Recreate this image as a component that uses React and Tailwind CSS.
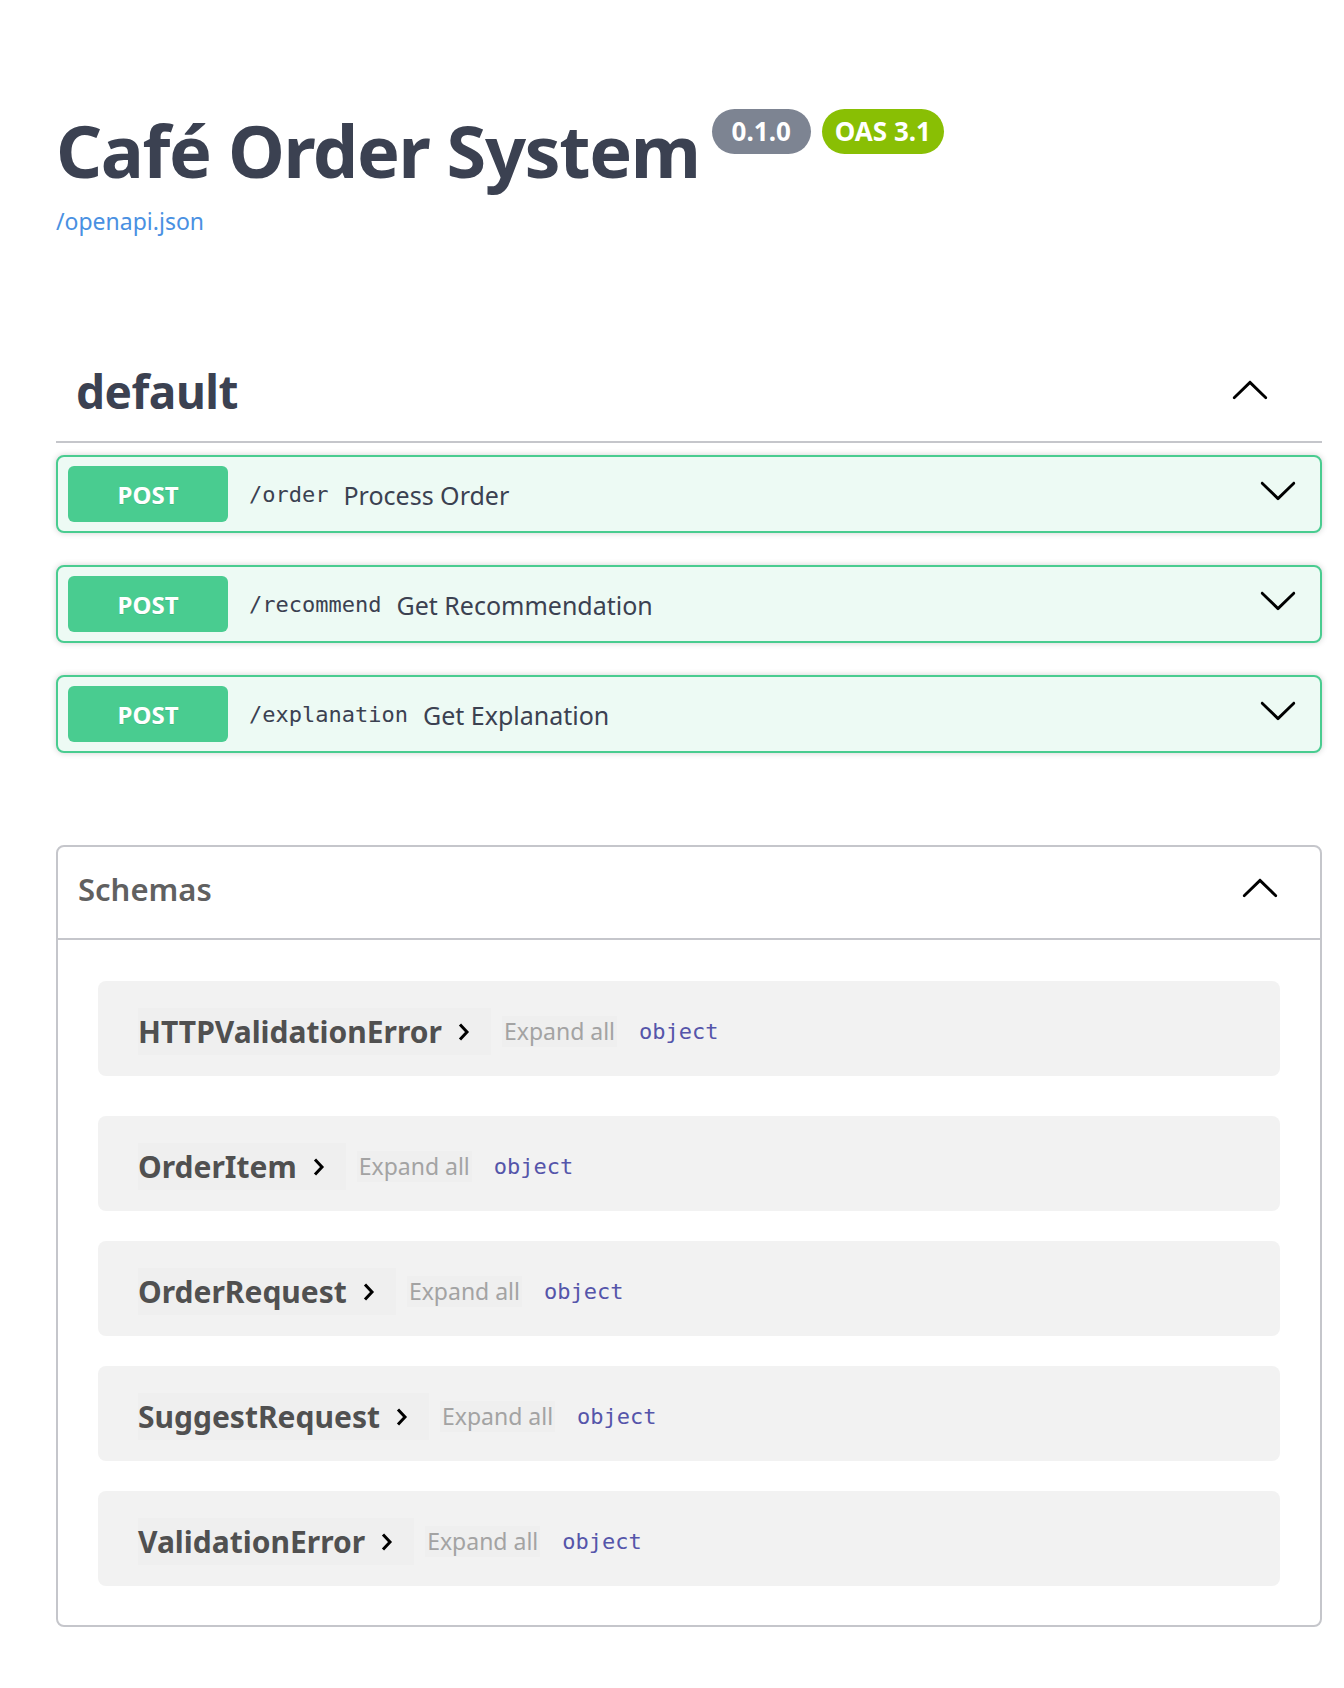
const Chevron = ({ className }) => (
  <svg viewBox="0 0 20 20" fill="currentColor" className={className}>
    <path d="M17.418 6.109c.272-.268.709-.268.979 0s.271.701 0 .969l-7.908 7.83c-.27.268-.707.268-.979 0l-7.908-7.83c-.27-.268-.27-.701 0-.969.271-.268.709-.268.979 0L10 13.25l7.418-7.141z" />
  </svg>
);

const ModelToggle = () => (
  <svg viewBox="0 0 14 20" className="ml-[15px] h-[20px] w-[14px]">
    <polyline points="3,2.5 10,10 3,17.5" fill="none" stroke="#000" strokeWidth="3" />
  </svg>
);

const operations = [
  { path: '/order', summary: 'Process Order' },
  { path: '/recommend', summary: 'Get Recommendation' },
  { path: '/explanation', summary: 'Get Explanation' },
];

const schemas = ['HTTPValidationError', 'OrderItem', 'OrderRequest', 'SuggestRequest', 'ValidationError'];

const Operation = ({ path, summary }) => (
  <div className="flex items-center rounded-[8px] border-2 border-[#49cc90] bg-[#edfaf4] px-[10px] py-[9px] shadow-[0_0_6px_rgba(0,0,0,0.19)]">
    <span className="flex h-[56px] w-[160px] items-center justify-center rounded-[6px] bg-[#49cc90] pt-[2px] text-[24px] font-bold text-white [text-shadow:0_1px_0_rgba(0,0,0,0.1)]">
      POST
    </span>
    <span className="ml-[21px] font-['DejaVu_Sans_Mono',monospace] text-[22px] text-[#3b4151]">{path}</span>
    <span className="ml-[15px] mt-[3px] text-[25px] text-[#3b4151]">{summary}</span>
    <Chevron className="mb-[8px] ml-auto mr-[12px] h-[40px] w-[40px] text-black" />
  </div>
);

const SchemaRow = ({ name, first }) => (
  <div className={`flex h-[95px] items-center rounded-[8px] bg-[#f2f2f2] pl-[40px] pt-[6px] ${first ? 'mb-[10px]' : ''}`}>
    <span className="flex h-[47px] items-center bg-[#efefef] pr-[20px]">
      <span className="text-[30px] font-bold text-[#505050]">{name}</span>
      <ModelToggle />
    </span>
    <span className="ml-[11px] flex h-[31px] items-center bg-[#efefef] px-[2px] text-[23px] text-[#a3a3a3]">Expand all</span>
    <span className="ml-[22px] font-['DejaVu_Sans_Mono',monospace] text-[22px] text-[#55a]">object</span>
  </div>
);

export default function App() {
  return (
    <div className="min-h-screen bg-white pb-[61px] pl-[56px] pr-[22px] pt-[109px] font-['Noto_Sans',sans-serif]">
      <div className="flex items-start">
        <h1 className="mt-[5px] text-[72px] font-bold leading-[72px] tracking-[-1.4px] text-[#3b4151]">Café Order System</h1>
        <span className="ml-[12px] flex h-[45px] items-center rounded-full bg-[#7d8492] px-[20px] text-[26px] font-bold text-white">0.1.0</span>
        <span className="ml-[11px] flex h-[45px] items-center rounded-full bg-[#89bf04] px-[13px] text-[26px] font-bold text-white">OAS 3.1</span>
      </div>
      <div className="mt-[20px]">
        <a className="text-[23px] leading-[31px] text-[#4990e2]">/openapi.json</a>
      </div>

      <div className="mt-[104px] flex items-center justify-between border-b-2 border-[#c5c6cb] py-[26px] pl-[20px] pr-[52px]">
        <h2 className="text-[46px] font-bold leading-[48px] tracking-[-0.5px] text-[#3b4151]">default</h2>
        <Chevron className="h-[40px] w-[40px] rotate-180 text-black" />
      </div>

      <div className="mt-[12px] flex flex-col gap-[32px]">
        {operations.map((op) => (
          <Operation key={op.path} {...op} />
        ))}
      </div>

      <div className="mt-[92px] rounded-[8px] border-2 border-[#c5c6cb]">
        <div className="flex h-[93px] items-center justify-between border-b-2 border-[#c5c6cb] pl-[20px] pr-[40px]">
          <h4 className="mb-[7px] text-[31px] font-semibold leading-[31px] text-[#606060]">Schemas</h4>
          <Chevron className="mb-[7px] h-[40px] w-[40px] rotate-180 text-black" />
        </div>
        <div className="flex flex-col gap-[30px] px-[40px] pb-[39px] pt-[41px]">
          {schemas.map((s, i) => (
            <SchemaRow key={s} name={s} first={i === 0} />
          ))}
        </div>
      </div>
    </div>
  );
}
